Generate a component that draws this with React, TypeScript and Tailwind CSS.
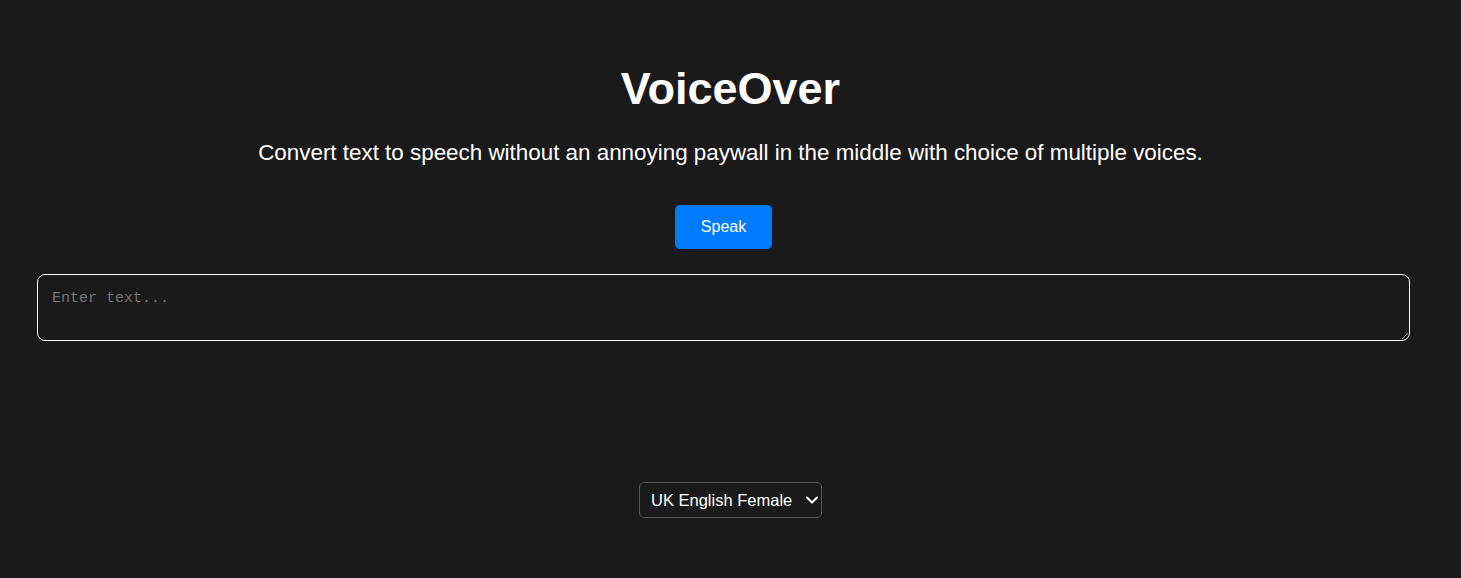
import { ChevronDown } from 'lucide-react';

export default function App() {
    return (
        <div className="min-h-[578px] bg-[#1a1a1a] text-white font-['Liberation_Sans',Arial,sans-serif]">
            <div className="flex flex-col items-center pt-[63px]">
                <h1 className="text-[45px] leading-[51px] font-bold">VoiceOver</h1>
                <p className="mt-[26px] text-[22.4px] leading-[26px]">
                    Convert text to speech without an annoying paywall in the middle with choice of multiple voices.
                </p>
                <button className="mt-[39px] mr-[14px] h-[44px] w-[97px] rounded-[5px] bg-[#007bff] text-[16px] text-white">
                    Speak
                </button>
            </div>
            <div className="mt-[25px] pl-[37px]">
                <textarea
                    placeholder="Enter text..."
                    className="block h-[67px] w-[1373px] rounded-[8px] border border-white bg-[#1a1a1a] px-[14px] pt-[14px] pb-[10px] font-['Liberation_Mono',monospace] text-[15px] leading-[20px] text-white placeholder:text-[#757575] outline-none"
                />
            </div>
            <div className="mt-[141px] flex justify-center">
                <div className="relative">
                    <select className="h-[36px] w-[183px] appearance-none rounded-[5px] border border-[#555555] bg-[#1a1a1a] pl-[11px] pr-[26px] text-[16.5px] text-white outline-none">
                        <option>UK English Female</option>
                        <option>UK English Male</option>
                        <option>US English Female</option>
                        <option>US English Male</option>
                    </select>
                    <ChevronDown
                        className="pointer-events-none absolute right-0 top-[8px] h-[20px] w-[20px] text-white"
                        strokeWidth={2.5}
                    />
                </div>
            </div>
        </div>
    );
}
